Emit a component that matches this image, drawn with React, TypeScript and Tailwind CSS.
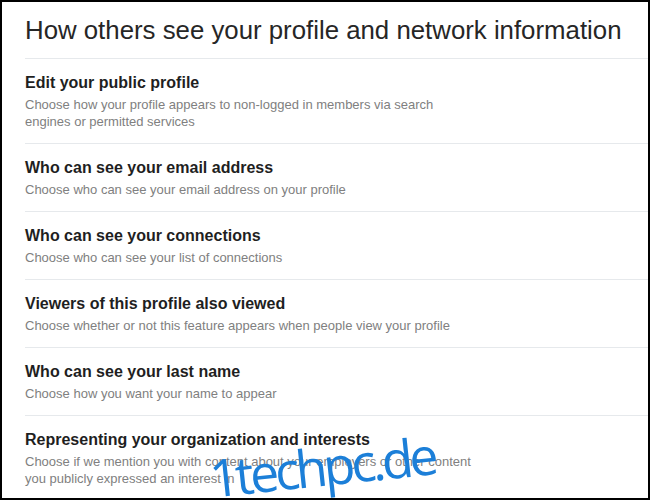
const rows = [
  {
    title: "Edit your public profile",
    desc: "Choose how your profile appears to non-logged in members via search engines or permitted services",
  },
  {
    title: "Who can see your email address",
    desc: "Choose who can see your email address on your profile",
  },
  {
    title: "Who can see your connections",
    desc: "Choose who can see your list of connections",
  },
  {
    title: "Viewers of this profile also viewed",
    desc: "Choose whether or not this feature appears when people view your profile",
  },
  {
    title: "Who can see your last name",
    desc: "Choose how you want your name to appear",
  },
  {
    title: "Representing your organization and interests",
    desc: "Choose if we mention you with content about your employers or other content you publicly expressed an interest in",
  },
];

export default function App() {
  return (
    <div className="relative w-[650px] h-[500px] overflow-hidden bg-white border-2 border-black font-['Liberation_Sans',Arial,sans-serif]">
      <div className="pl-[23px]">
        <h1 className="h-[57px] pt-[12px] text-[25.8px] leading-[32px] text-[#262626] border-b border-[#e6e9ec]">
          How others see your profile and network information
        </h1>
        {rows.map((r) => (
          <div key={r.title} className="pt-[14px] pb-[13px] border-b border-[#e6e9ec]">
            <div className="text-[16px] leading-[20px] font-bold text-[#1f1f1f]">{r.title}</div>
            <p className="mt-[3px] max-w-[455px] text-[13px] leading-[17px] text-[#808080]">{r.desc}</p>
          </div>
        ))}
      </div>
      {/* watermark */}
      <div className="absolute left-[207px] top-[438px] -rotate-6 text-[52px] leading-none text-[#1c7fd8] font-['Open_Sans',sans-serif] tracking-[-4px]">
        1techpc.de
      </div>
    </div>
  );
}
